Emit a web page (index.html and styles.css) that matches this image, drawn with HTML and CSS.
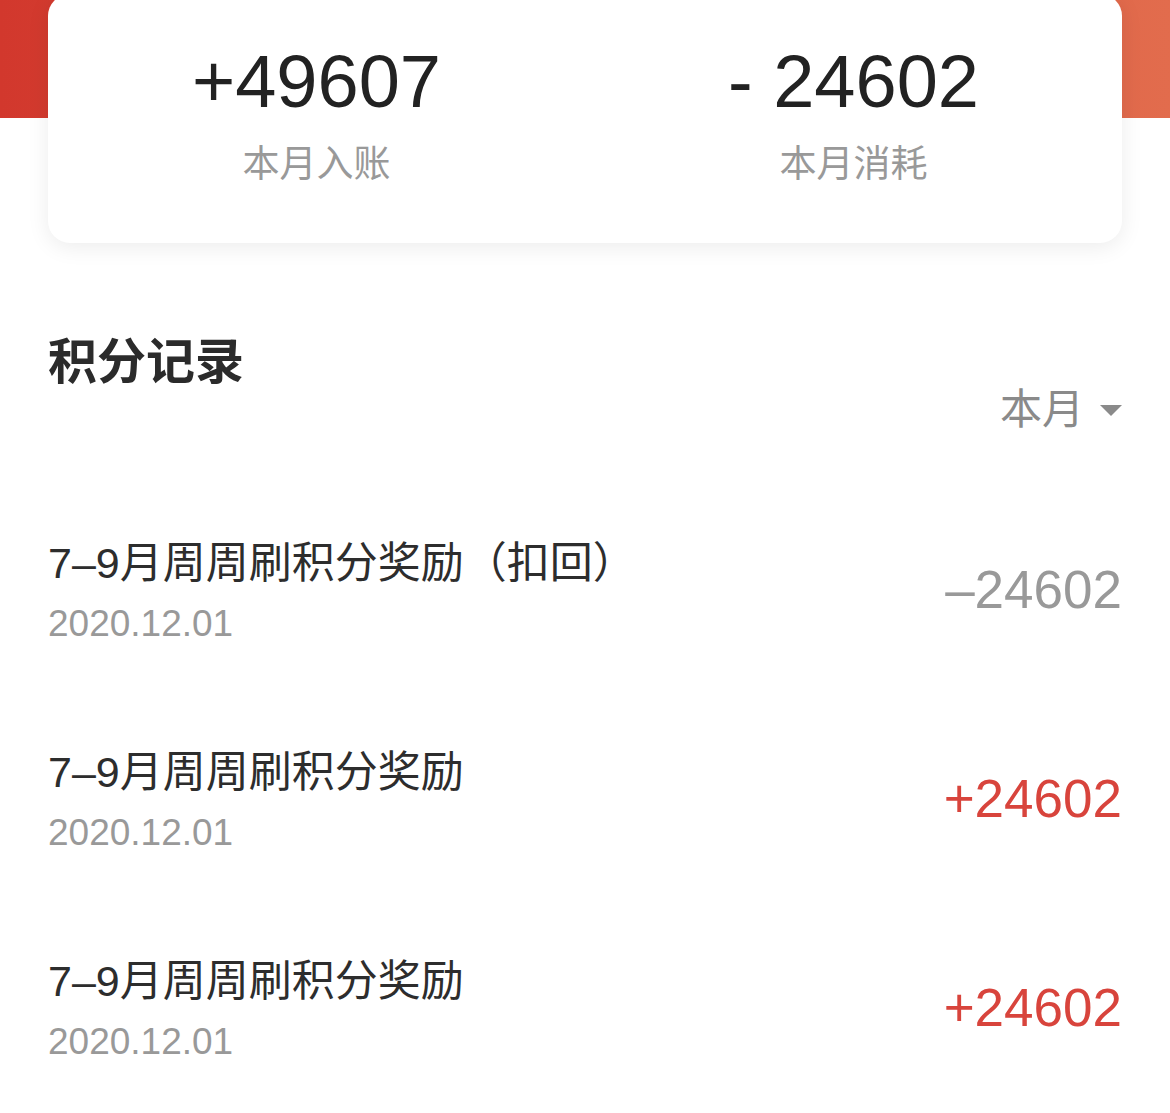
FILE: index.html
```html
<!DOCTYPE html>
<html lang="zh-CN">
<head>
    <meta charset="UTF-8">
    <meta name="viewport" content="width=device-width, initial-scale=1.0">
    <title>积分记录</title>
    <link rel="stylesheet" href="styles.css">
</head>
<body>
    <div class="summary">
        <div class="card">
            <div class="stat">
                <div class="stat-num">+49607</div>
                <div class="stat-label">本月入账</div>
            </div>
            <div class="stat">
                <div class="stat-num">- 24602</div>
                <div class="stat-label">本月消耗</div>
            </div>
        </div>
    </div>

    <div class="records">
        <div class="records-head">
            <h2>积分记录</h2>
            <div class="filter">
                本月
                <svg class="filter-arrow" width="22" height="12" viewBox="0 0 22 12">
                    <path d="M0 1 L22 1 L11 12 Z" fill="#8a8a8a"/>
                </svg>
            </div>
        </div>

        <ul class="record-list">
            <li class="record">
                <div class="record-info">
                    <div class="record-title">7–9月周周刷积分奖励（扣回）</div>
                    <div class="record-date">2020.12.01</div>
                </div>
                <div class="record-amount minus">–24602</div>
            </li>
            <li class="record">
                <div class="record-info">
                    <div class="record-title">7–9月周周刷积分奖励</div>
                    <div class="record-date">2020.12.01</div>
                </div>
                <div class="record-amount plus">+24602</div>
            </li>
            <li class="record">
                <div class="record-info">
                    <div class="record-title">7–9月周周刷积分奖励</div>
                    <div class="record-date">2020.12.01</div>
                </div>
                <div class="record-amount plus">+24602</div>
            </li>
        </ul>
    </div>
</body>
</html>
```

FILE: styles.css
```css
body {
    font-family: "Liberation Sans", "Noto Sans CJK SC", sans-serif;
    background-color: #fff;
    color: #2d2d2d;
    margin: 0;
    padding: 0;
    overflow: hidden;
}

/* top red band with the summary card */
.summary {
    display: flow-root;
    padding: 0 48px;
    background: linear-gradient(to right, #d2382d, #e26c4d) top / 100% 118px no-repeat;
}

.card {
    display: flex;
    margin-top: -6px;
    padding: 48px 0 56px;
    background-color: #fff;
    border-radius: 22px;
    box-shadow: 0 4px 22px rgba(0, 0, 0, 0.08);
}

.stat {
    flex: 1;
    text-align: center;
}

.stat-num {
    font-size: 74px;
    line-height: 80px;
    color: #222;
}

.stat-label {
    margin-top: 21px;
    font-size: 37px;
    line-height: 44px;
    color: #999;
}

/* record list */
.records {
    padding: 0 48px;
}

.records-head {
    display: flex;
    justify-content: space-between;
    align-items: flex-start;
    margin-top: 89px;
}

.records-head h2 {
    margin: 0;
    font-size: 49px;
    line-height: 60px;
    font-weight: bold;
    color: #2b2b2b;
}

.filter {
    display: flex;
    align-items: center;
    margin-top: 53px;
    font-size: 42px;
    line-height: 50px;
    color: #8a8a8a;
}

.filter-arrow {
    margin-left: 16px;
}

.record-list {
    list-style: none;
    margin: 98px 0 0;
    padding: 0;
    display: flex;
    flex-direction: column;
    gap: 87px;
}

.record {
    display: flex;
    justify-content: space-between;
    align-items: center;
}

.record-title {
    font-size: 43px;
    line-height: 60px;
    color: #2d2d2d;
}

.record-date {
    font-size: 37px;
    line-height: 62px;
    color: #999;
}

.record-amount {
    font-size: 53px;
    line-height: 60px;
    padding-bottom: 8px;
}

.record-amount.minus {
    color: #999;
}

.record-amount.plus {
    color: #d8443c;
}
```
